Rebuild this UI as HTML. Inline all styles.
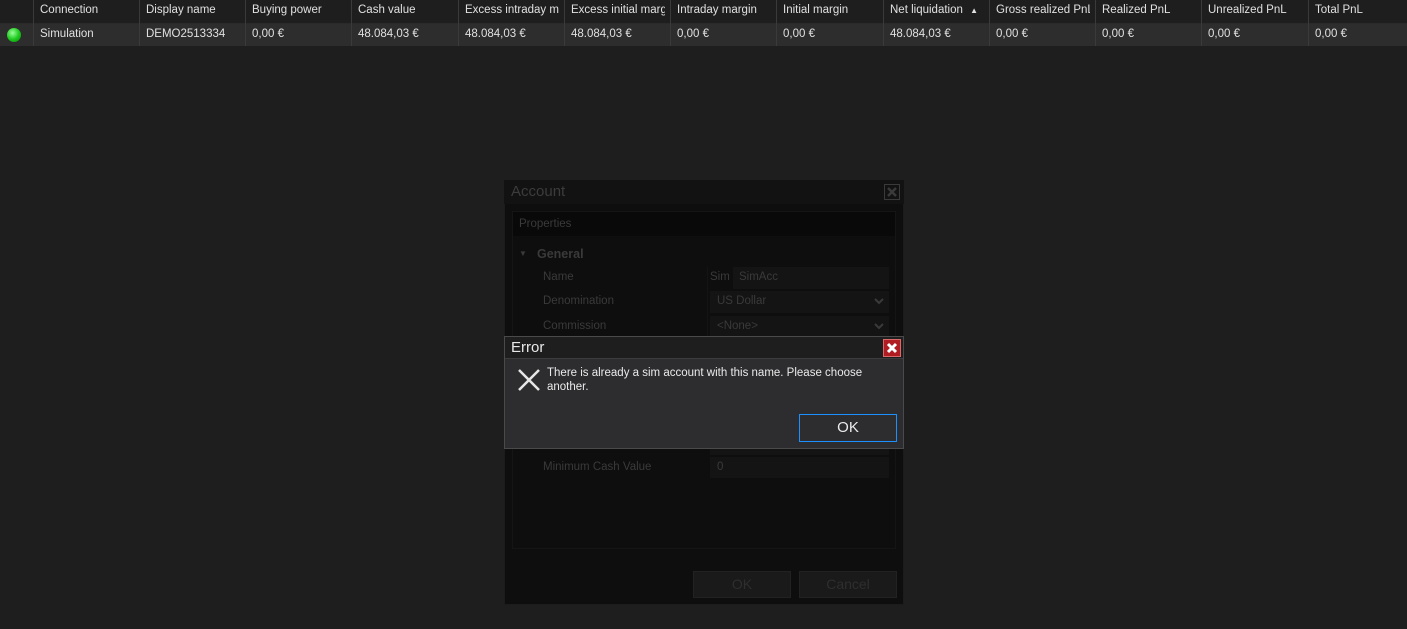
<!DOCTYPE html>
<html><head><meta charset="utf-8"><style>
*{margin:0;padding:0;box-sizing:border-box}
body{width:1407px;height:629px;background:#1e1e1e;font-family:"Liberation Sans",sans-serif;font-size:11.5px;color:#e6e6e6;position:relative;overflow:hidden}
.a{position:absolute;white-space:nowrap}
.hdr{position:absolute;left:0;top:0;width:1407px;height:24px;background:#1e1e1e;border-bottom:1px solid #2a2a2a}
.row{position:absolute;left:0;top:24px;width:1407px;height:22px;background:#2d2d2d}
.cl{position:absolute;top:0;width:1px;height:46px;background:#3a3a3a}
.ht{top:4px;color:#e0e0e0}
.rt{top:28px;color:#e0e0e0}
.dim{color:#3a3a3a}
</style></head><body>
<div class="hdr"></div><div class="row"></div>
<div class="cl" style="left:33px"></div><div class="cl" style="left:139px"></div><div class="cl" style="left:245px"></div><div class="cl" style="left:351px"></div><div class="cl" style="left:458px"></div><div class="cl" style="left:564px"></div><div class="cl" style="left:670px"></div><div class="cl" style="left:776px"></div><div class="cl" style="left:883px"></div><div class="cl" style="left:989px"></div><div class="cl" style="left:1095px"></div><div class="cl" style="left:1201px"></div><div class="cl" style="left:1308px"></div>
<div class="a ht" style="left:40px">Connection</div>
<div class="a ht" style="left:146px">Display name</div>
<div class="a ht" style="left:252px">Buying power</div>
<div class="a ht" style="left:358px">Cash value</div>
<div class="a ht" style="left:465px;width:94px;overflow:hidden">Excess intraday margin</div>
<div class="a ht" style="left:571px;width:94px;overflow:hidden">Excess initial margin</div>
<div class="a ht" style="left:677px">Intraday margin</div>
<div class="a ht" style="left:783px">Initial margin</div>
<div class="a ht" style="left:890px">Net liquidation <span style="font-size:8px;margin-left:4px">▲</span></div>
<div class="a ht" style="left:996px;width:94px;overflow:hidden">Gross realized PnL</div>
<div class="a ht" style="left:1102px">Realized PnL</div>
<div class="a ht" style="left:1208px">Unrealized PnL</div>
<div class="a ht" style="left:1315px">Total PnL</div>
<div class="a" style="left:7px;top:28px;width:14px;height:14px;border-radius:50%;background:radial-gradient(circle at 40% 35%,#9f9,#2c2 50%,#080)"></div>
<div class="a rt" style="left:40px">Simulation</div>
<div class="a rt" style="left:146px">DEMO2513334</div>
<div class="a rt" style="left:252px">0,00 €</div>
<div class="a rt" style="left:358px">48.084,03 €</div>
<div class="a rt" style="left:465px">48.084,03 €</div>
<div class="a rt" style="left:571px">48.084,03 €</div>
<div class="a rt" style="left:677px">0,00 €</div>
<div class="a rt" style="left:783px">0,00 €</div>
<div class="a rt" style="left:890px">48.084,03 €</div>
<div class="a rt" style="left:996px">0,00 €</div>
<div class="a rt" style="left:1102px">0,00 €</div>
<div class="a rt" style="left:1208px">0,00 €</div>
<div class="a rt" style="left:1315px">0,00 €</div>

<div class="a" style="left:504px;top:180px;width:400px;height:425px;background:#0e0e0e;border:1px solid #1c1c1c"></div>
<div class="a" style="left:504px;top:180px;width:400px;height:24px;background:#121212"></div>
<div class="a" style="left:511px;top:183px;font-size:15px;color:#3c3c3c">Account</div>
<div class="a" style="left:884px;top:184px;width:16px;height:16px;border:1px solid #3a3a3a">
<svg width="14" height="14" viewBox="0 0 14 14"><path d="M3 3L11 11M11 3L3 11" stroke="#3a3a3a" stroke-width="2.5"/></svg></div>
<div class="a" style="left:512px;top:211px;width:384px;height:338px;border:1px solid #151515"></div>
<div class="a" style="left:513px;top:212px;width:382px;height:24px;background:#090909"></div>
<div class="a dim" style="left:519px;top:218px">Properties</div>
<div class="a dim" style="left:519px;top:249px;font-size:8px">▼</div>
<div class="a dim" style="left:537px;top:247px;font-weight:bold;font-size:12.5px">General</div>
<div class="a" style="left:707px;top:267px;width:1px;height:180px;background:#141414"></div>
<div class="a dim" style="left:543px;top:271px">Name</div>
<div class="a dim" style="left:710px;top:271px">Sim</div>
<div class="a" style="left:733px;top:267px;width:156px;height:22px;background:#141414"></div>
<div class="a dim" style="left:739px;top:271px">SimAcc</div>
<div class="a dim" style="left:543px;top:295px">Denomination</div>
<div class="a" style="left:710px;top:291px;width:179px;height:22px;background:#141414"></div>
<div class="a dim" style="left:717px;top:295px">US Dollar</div>
<svg class="a" style="left:874px;top:298px" width="10" height="7" viewBox="0 0 10 7"><path d="M1 1L5 5L9 1" stroke="#3a3a3a" stroke-width="2" fill="none"/></svg>
<div class="a dim" style="left:543px;top:320px">Commission</div>
<div class="a" style="left:710px;top:316px;width:179px;height:20px;background:#141414"></div>
<div class="a dim" style="left:717px;top:320px">&lt;None&gt;</div>
<svg class="a" style="left:874px;top:323px" width="10" height="7" viewBox="0 0 10 7"><path d="M1 1L5 5L9 1" stroke="#3a3a3a" stroke-width="2" fill="none"/></svg>
<div class="a" style="left:710px;top:449px;width:179px;height:6px;background:#141414"></div>
<div class="a dim" style="left:543px;top:461px">Minimum Cash Value</div>
<div class="a" style="left:710px;top:457px;width:179px;height:21px;background:#141414"></div>
<div class="a dim" style="left:717px;top:461px">0</div>
<div class="a" style="left:693px;top:571px;width:98px;height:27px;background:#1a1a1a;border:1px solid #222;color:#2e2e2e;font-size:14px;text-align:center;line-height:25px">OK</div>
<div class="a" style="left:799px;top:571px;width:98px;height:27px;background:#1a1a1a;border:1px solid #222;color:#2e2e2e;font-size:14px;text-align:center;line-height:25px">Cancel</div>

<div class="a" style="left:504px;top:336px;width:400px;height:113px;background:#2d2d30;border:1px solid #4a4a4a"></div>
<div class="a" style="left:505px;top:337px;width:398px;height:22px;background:#1e1e1e;border-bottom:1px solid #3c3c3c"></div>
<div class="a" style="left:511px;top:339px;font-size:15px;color:#e8e8e8">Error</div>
<div class="a" style="left:883px;top:339px;width:18px;height:18px;background:#b01c22;border:1px solid #d86a6a">
<svg width="16" height="16" viewBox="0 0 16 16"><path d="M4 4L12 12M12 4L4 12" stroke="#fff" stroke-width="3"/></svg></div>
<svg class="a" style="left:517px;top:368px" width="24" height="24" viewBox="0 0 24 24"><path d="M2 2L22 22M22 2L2 22" stroke="#e6e6e6" stroke-width="2.5"/></svg>
<div class="a" style="left:547px;top:366px;color:#eaeaea;line-height:14px">There is already a sim account with this name. Please choose<br>another.</div>
<div class="a" style="left:799px;top:414px;width:98px;height:28px;border:1px solid #1e8fff;background:#2d2d30;color:#eaeaea;font-size:15px;text-align:center;line-height:26px">OK</div>
</body></html>
